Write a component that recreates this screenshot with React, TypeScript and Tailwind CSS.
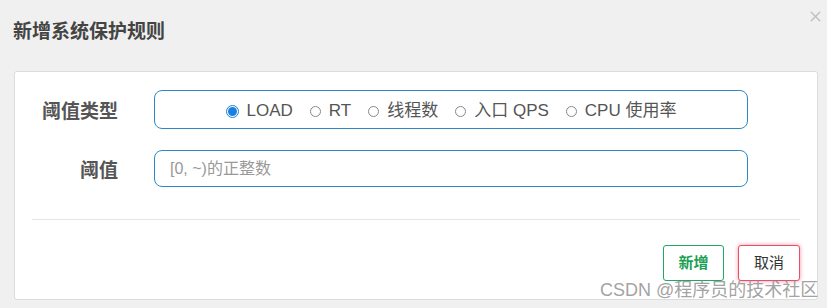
import { X } from "lucide-react";

const options = ["LOAD", "RT", "线程数", "入口 QPS", "CPU 使用率"];

export default function App() {
  return (
    <div
      className="relative w-[827px] h-[308px] bg-[#f0f0f0] overflow-hidden"
      style={{ fontFamily: '"Liberation Sans", "Noto Sans CJK SC", sans-serif' }}
    >
      {/* Header */}
      <div className="h-[71px] flex items-start justify-between pl-[13px] pr-[3px]">
        <h1 className="mt-[19px] text-[19px] leading-[26px] font-bold text-[#444]">新增系统保护规则</h1>
        <X size={17} strokeWidth={2.2} className="mt-[8px] text-[#c2c2c2]" />
      </div>

      {/* Body */}
      <div className="ml-[14px] w-[804px] h-[229px] bg-white border border-[#dcdcdc] rounded-[3px] pt-[18px]">
        <div className="flex items-center h-[39px]">
          <label className="w-[103px] pt-[6px] text-right text-[19px] font-bold text-[#555]">阈值类型</label>
          <div className="ml-[36px] w-[594px] h-[39px] border-[1.5px] border-[#2a8bc4] rounded-[8px] flex items-center justify-center gap-[17px] pt-[3px] text-[17px] text-[#555]">
            {options.map((o, i) => (
              <span key={o} className="flex items-center gap-[8px]">
                {i === 0 ? (
                  <span className="w-[13px] h-[13px] rounded-full border border-[#1a7fe0] flex items-center justify-center">
                    <span className="w-[9px] h-[9px] rounded-full bg-[#1a7fe0]" />
                  </span>
                ) : (
                  <span className="w-[11px] h-[11px] rounded-full border border-[#888]" />
                )}
                {o}
              </span>
            ))}
          </div>
        </div>

        <div className="flex items-center h-[37px] mt-[21px]">
          <label className="w-[103px] pt-[6px] text-right text-[19px] font-bold text-[#555]">阈值</label>
          <div className="ml-[36px] w-[594px] h-[37px] border-[1.5px] border-[#2a8bc4] rounded-[8px] flex items-center pl-[15px] text-[16px] text-[#999]">
            [0, ~)的正整数
          </div>
        </div>

        <div className="ml-[17px] mr-[17px] mt-[32px] border-t-[1.5px] border-[#e6e6e6]" />

        <div className="flex justify-end gap-[14px] pr-[17px] mt-[25px]">
          <button className="w-[61px] h-[36px] border-[1.5px] border-[#20a862] rounded-[3px] text-[15px] font-bold text-[#1aa055] bg-white">
            新增
          </button>
          <button className="w-[62px] h-[36px] border-[1.5px] border-[#e8506a] rounded-[3px] text-[15px] text-[#333] bg-white shadow-[0_0_4px_rgba(232,80,106,0.6)]">
            取消
          </button>
        </div>
      </div>

      {/* Watermark */}
      <div className="absolute left-[600px] top-[277px] text-[18px] text-[#8a8a8a]/80 whitespace-nowrap">
        CSDN @程序员的技术社区
      </div>
    </div>
  );
}
